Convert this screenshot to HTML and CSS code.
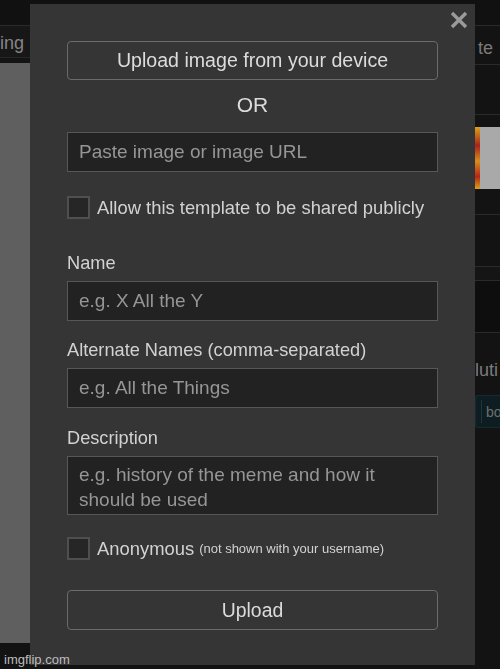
FILE: index.html
```html
<!DOCTYPE html>
<html lang="en">
<head>
    <meta charset="UTF-8">
    <meta name="viewport" content="width=device-width, initial-scale=1.0">
    <title>Upload a new template</title>
    <link rel="stylesheet" href="styles.css">
</head>
<body>

    <!-- the page behind the popup -->
    <div class="page">
        <div class="topbar"></div>
        <div class="main">
            <div class="left-col">
                <div class="nav-left">ing</div>
                <div class="preview"></div>
            </div>
            <div class="right-col">
                <div class="nav-right">te</div>
                <div class="r-row r-tall"></div>
                <div class="thumb">
                    <span class="thumb-strip"></span>
                    <span class="thumb-gray"></span>
                </div>
                <div class="r-row r-gap"></div>
                <div class="r-row r-mid"></div>
                <div class="r-row r-thin"></div>
                <div class="r-row r-dark"></div>
                <div class="r-text">luti</div>
                <div class="r-box"><span class="r-box-sep"></span><span class="r-box-text">bo</span></div>
            </div>
        </div>
    </div>

    <div class="modal">
        <svg class="close" width="18" height="18" viewBox="0 0 18 18">
            <path d="M2 2 L16 16 M16 2 L2 16" stroke="#9a9a9a" stroke-width="3.4" stroke-linecap="butt"/>
        </svg>

        <button class="btn upload-device" type="button">Upload image from your device</button>
        <p class="or">OR</p>
        <input type="text" class="text-input" placeholder="Paste image or image URL">

        <label class="check-row share-row">
            <span class="check"></span>
            Allow this template to be shared publicly
        </label>

        <div class="field name-field">
            <div class="field-label">Name</div>
            <input type="text" class="text-input" placeholder="e.g. X All the Y">
        </div>
        <div class="field">
            <div class="field-label">Alternate Names (comma-separated)</div>
            <input type="text" class="text-input" placeholder="e.g. All the Things">
        </div>
        <div class="field desc-field">
            <div class="field-label">Description</div>
            <textarea class="text-area" placeholder="e.g. history of the meme and how it should be used"></textarea>
        </div>

        <label class="check-row anon-row">
            <span class="check"></span>
            Anonymous <small>(not shown with your username)</small>
        </label>

        <button class="btn upload-btn" type="button">Upload</button>
    </div>

    <div class="watermark">imgflip.com</div>

</body>
</html>
```

FILE: styles.css
```css
body {
    margin: 0;
    padding: 0;
    height: 669px;
    overflow: hidden;
    background-color: #131313;
    font-family: "Liberation Sans", Arial, sans-serif;
}

/* page behind the popup */
.topbar {
    height: 25px;
    background-color: #111;
    border-bottom: 1px solid #2a2a2a;
}
.main {
    display: grid;
    grid-template-columns: 475px 1fr;
}
.left-col {
    background-color: #141414;
}
.nav-left {
    height: 31px;
    line-height: 34px;
    background-color: #171717;
    border-bottom: 1px solid #262626;
    color: #858585;
    font-size: 18px;
}
.preview {
    margin-top: 5px;
    height: 580px;
    background-color: #5f5f5f;
}
.right-col {
    background-color: #131313;
}
.nav-right {
    height: 38px;
    line-height: 44px;
    padding-left: 3px;
    border-bottom: 1px solid #2a2a2a;
    color: #7a7a7a;
    font-size: 18px;
}
.r-row {
    border-bottom: 1px solid #2a2a2a;
}
.r-tall {
    height: 49px;
}
.thumb {
    display: flex;
    height: 62px;
    margin-top: 12px;
}
.thumb-strip {
    width: 5px;
    background: linear-gradient(#d9a21a, #a8241a 30%, #d78c1c 55%, #b52618 80%, #d9a21a);
}
.thumb-gray {
    flex: 1;
    background-color: #a9a9a9;
}
.r-gap {
    height: 25px;
}
.r-mid {
    height: 51px;
}
.r-thin {
    height: 13px;
    background-color: #151515;
}
.r-dark {
    height: 51px;
    background-color: #0e0e0e;
}
.r-text {
    margin-top: 26px;
    line-height: 22px;
    color: #7c7c7c;
    font-size: 18px;
}
.r-box {
    display: flex;
    align-items: center;
    height: 31px;
    margin-top: 14px;
    background-color: #0e1d21;
    border: 1px solid #15292e;
    border-right: none;
    border-radius: 3px 0 0 3px;
    color: #6f6f6f;
    font-size: 14px;
}
.r-box-sep {
    width: 1px;
    height: 23px;
    margin: 0 4px 0 5px;
    background-color: #1e363c;
}
.r-box-text {
    white-space: nowrap;
}

/* popup */
.modal {
    position: absolute;
    top: 4px;
    left: 30px;
    width: 445px;
    height: 661px;
    padding: 37px 37px 0;
    box-sizing: border-box;
    background-color: #353535;
}
.close {
    position: absolute;
    top: 7px;
    right: 7px;
}
.btn {
    display: block;
    width: 100%;
    height: 39px;
    padding: 0;
    border: 1px solid #6a6a6a;
    border-radius: 4px;
    background-color: #353535;
    color: #dcdcdc;
    font-family: "Liberation Sans", Arial, sans-serif;
    cursor: pointer;
}
.upload-device {
    font-size: 19.6px;
}
.or {
    margin: 0;
    height: 52px;
    line-height: 50px;
    text-align: center;
    color: #dcdcdc;
    font-size: 21px;
}
.text-input, .text-area {
    display: block;
    width: 100%;
    box-sizing: border-box;
    margin: 0;
    border: 1px solid #575757;
    background-color: #222;
    color: #ddd;
    font-family: "Liberation Sans", Arial, sans-serif;
    font-size: 19px;
    outline: none;
}
.text-input {
    height: 40px;
    padding: 0 11px;
}
.text-area {
    height: 59px;
    padding: 5px 11px;
    line-height: 25px;
    resize: none;
}
.text-input::placeholder, .text-area::placeholder {
    color: #969696;
    opacity: 1;
}
.check-row {
    display: flex;
    align-items: center;
    gap: 7px;
    height: 23px;
    color: #d2d2d2;
    font-size: 18.4px;
}
.check-row small {
    font-size: 13px;
    margin-left: -2px;
}
.check {
    width: 19px;
    height: 19px;
    border: 2px solid #4f4f4f;
    background-color: #262626;
}
.share-row {
    margin-top: 24px;
}
.field {
    margin-top: 18px;
}
.name-field {
    margin-top: 33px;
}
.desc-field {
    margin-top: 19px;
}
.field-label {
    line-height: 22px;
    margin-bottom: 7px;
    color: #d2d2d2;
    font-size: 18.2px;
}
.anon-row {
    margin-top: 22px;
}
.upload-btn {
    height: 40px;
    margin-top: 30px;
    font-size: 19.4px;
}

.watermark {
    position: absolute;
    left: 4px;
    bottom: 1px;
    color: #bdbdbd;
    font-size: 13px;
    line-height: 16px;
}
```
